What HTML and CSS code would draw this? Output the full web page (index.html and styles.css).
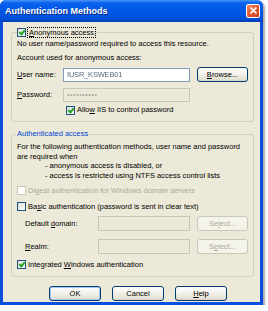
FILE: index.html
```html
<!DOCTYPE html>
<html lang="en">

<head>
	<meta charset="UTF-8">
	<link rel="stylesheet" href="styles.css">
	<title>Authentication Methods</title>
</head>

<body>
	<div class="window">
		<div class="titlebar">
			<span class="title">Authentication Methods</span>
			<span class="close-btn">
				<svg width="7" height="7" viewBox="0 0 7 7">
					<path d="M0.5 0.5 L6.5 6.5 M6.5 0.5 L0.5 6.5" stroke="#fff" stroke-width="1.6" />
				</svg>
			</span>
		</div>
		<div class="client">
			<fieldset class="group">
				<legend class="legend-check">
					<span class="check checked"></span>
					<span class="focus"><u>A</u>nonymous access</span>
				</legend>
				<div class="line first">No user name/password required to access this resource.</div>
				<div class="line gap4">Account used for anonymous access:</div>
				<div class="field-row gap4">
					<span class="label label-short"><u>U</u>ser name:</span>
					<span class="input wide"><span class="blurred">IUSR_KSWEB01</span></span>
					<span class="btn"><u>B</u>rowse...</span>
				</div>
				<div class="field-row gap5">
					<span class="label label-short"><u>P</u>assword:</span>
					<span class="input wide disabled"><span class="dots">&bull;&bull;&bull;&bull;&bull;&bull;&bull;&bull;&bull;&bull;</span></span>
				</div>
				<div class="check-row allow">
					<span class="check checked"></span>
					<span>Allo<u>w</u> IIS to control password</span>
				</div>
			</fieldset>

			<fieldset class="group second">
				<legend class="legend-text">Authenticated access</legend>
				<div class="info">
					For the following authentication methods, user name and password<br>
					are required when
					<div class="bullet">- anonymous access is disabled, or</div>
					<div class="bullet">- access is restricted using NTFS access control lists</div>
				</div>
				<div class="check-row digest muted">
					<span class="check off"></span>
					<span>Di<u>g</u>est authentication for Windows domain servers</span>
				</div>
				<div class="check-row basic">
					<span class="check"></span>
					<span>Ba<u>s</u>ic authentication (password is sent in clear text)</span>
				</div>
				<div class="field-row domain">
					<span class="label label-long">Default <u>d</u>omain:</span>
					<span class="input narrow disabled"></span>
					<span class="btn off">Se<u>l</u>ect...</span>
				</div>
				<div class="field-row realm">
					<span class="label label-long"><u>R</u>ealm:</span>
					<span class="input narrow disabled"></span>
					<span class="btn off">S<u>e</u>lect...</span>
				</div>
				<div class="check-row integrated">
					<span class="check checked"></span>
					<span>Integrated <u>W</u>indows authentication</span>
				</div>
			</fieldset>

			<div class="buttons">
				<span class="btn big default">OK</span>
				<span class="btn big">Cancel</span>
				<span class="btn big"><u>H</u>elp</span>
			</div>
		</div>
	</div>
</body>

</html>
```

FILE: styles.css
```css
body {
	margin: 0;
	background-color: #ffffff;
	font-family: "Liberation Sans", Arial, sans-serif;
	font-size: 7.5px;
	color: #000;
}

u {
	text-decoration-thickness: 1px;
	text-underline-offset: 1px;
}

.window {
	width: 263px;
	height: 305px;
	background-color: #0a4fdc;
	border-radius: 6px 6px 0 0;
	display: flex;
	flex-direction: column;
	box-shadow: 2px 2px 2px rgba(0, 0, 0, 0.35);
}

.titlebar {
	height: 22px;
	flex: none;
	display: flex;
	align-items: center;
	justify-content: space-between;
	padding: 0 3px 0 5px;
	border-radius: 6px 6px 0 0;
	background: linear-gradient(#4a94f8 0, #0a62ec 3px, #0058e8 45%, #0052dd 80%, #0040b8 100%);
}

.title {
	color: #ffffff;
	font-weight: bold;
	font-size: 9px;
	text-shadow: 1px 1px 0 #0a2a8a;
	margin-top: -1px;
}

.close-btn {
	width: 12px;
	height: 12px;
	border: 1px solid #ffffff;
	border-radius: 2px;
	background: linear-gradient(135deg, #f08a62, #e0542c 55%, #c8401c);
	display: flex;
	align-items: center;
	justify-content: center;
	margin-top: -1px;
}

.client {
	flex: 1;
	margin: 0 3px 3px;
	background-color: #ece9d8;
	padding: 5px 6px 0 8px;
}

.group {
	margin: 0;
	padding: 0 5px 6px;
	border: 1px solid #d0d0bf;
	border-radius: 3px;
	min-width: 0;
}

.group.second {
	margin-top: 7px;
	padding-bottom: 6px;
}

.legend-check,
.legend-text {
	padding: 0 2px 0 0;
	height: 10px;
	line-height: 10px;
	display: flex;
	align-items: center;
	gap: 2px;
}

.legend-text {
	color: #0046d5;
	padding: 0 1px;
	margin-left: -1px;
}

.focus {
	outline: 1px dotted #000;
	outline-offset: 0;
	padding: 0 1px;
	line-height: 9px;
}

.line {
	height: 10px;
	line-height: 10px;
}

.first {
	margin-top: 2px;
}

.gap4 {
	margin-top: 4px;
}

.gap5 {
	margin-top: 5px;
}

.field-row {
	display: flex;
	align-items: center;
	height: 15px;
}

.label {
	flex: none;
}

.label-short {
	width: 46px;
}

.label-long {
	width: 73px;
	padding-left: 8px;
}

.input {
	height: 14px;
	box-sizing: border-box;
	border: 1px solid #7f9db9;
	background-color: #ffffff;
	display: flex;
	align-items: center;
	padding-left: 3px;
	flex: none;
}

.input.wide {
	width: 127px;
}

.input.narrow {
	width: 92px;
	height: 15px;
}

.input.disabled {
	background-color: #ece9d8;
	border-color: #c9c7ba;
}

.blurred {
	display: inline-block;
	color: #5a6a80;
	filter: blur(0.7px);
	letter-spacing: -0.2px;
}

.dots {
	color: #aca899;
	letter-spacing: 0.6px;
	font-size: 7px;
}

.btn {
	flex: none;
	box-sizing: border-box;
	width: 51px;
	height: 15px;
	margin-left: 7px;
	border: 1px solid #003c74;
	border-radius: 3px;
	background: linear-gradient(#ffffff, #f4f3ee 40%, #e6e3d6 85%, #d6d0c5);
	display: flex;
	align-items: center;
	justify-content: center;
}

.btn.off {
	border-color: #c9c7ba;
	color: #aca899;
	background: #f5f4ea;
}

.check-row {
	display: flex;
	align-items: center;
	gap: 2px;
	height: 10px;
	line-height: 10px;
}

.check {
	width: 9px;
	height: 9px;
	box-sizing: border-box;
	border: 1px solid #1c5180;
	background: linear-gradient(135deg, #dcdcd7, #ffffff);
	flex: none;
	position: relative;
}

.check.checked::after {
	content: "";
	position: absolute;
	left: 1px;
	top: 0px;
	width: 2px;
	height: 4px;
	border-right: 2px solid #21a121;
	border-bottom: 2px solid #21a121;
	transform: translate(1px, 0) rotate(40deg);
}

.check.off {
	border-color: #cac8bb;
	background: #ffffff;
}

.muted {
	color: #aca899;
}

.allow {
	margin-top: 3px;
	margin-left: 49px;
}

.info {
	margin-top: 3px;
	line-height: 9.7px;
}

.bullet {
	margin-left: 28px;
}

.digest {
	margin-top: 5px;
}

.basic {
	margin-top: 6px;
}

.domain {
	margin-top: 4px;
}

.realm {
	margin-top: 8px;
}

.integrated {
	margin-top: 6px;
}

.buttons {
	display: flex;
	margin-top: 9px;
	padding-left: 38px;
	gap: 11px;
}

.btn.big {
	width: 52px;
	margin-left: 0;
}

.btn.default {
	box-shadow: inset 0 0 0 1px #a8c4ef;
}
```
